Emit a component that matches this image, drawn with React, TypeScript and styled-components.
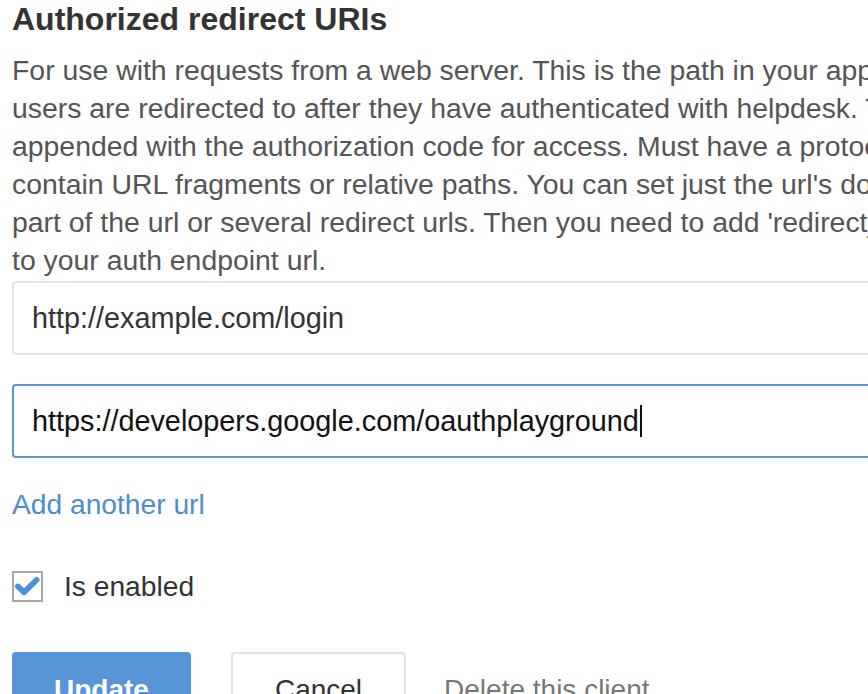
import React from 'react';
import styled, { createGlobalStyle } from 'styled-components';

const GlobalStyle = createGlobalStyle`
  html, body {
    margin: 0;
    padding: 0;
    background: #ffffff;
    overflow: hidden;
  }
  body {
    font-family: "Liberation Sans", Arial, Helvetica, sans-serif;
  }
`;

const Page = styled.div`
  width: 1200px;
  padding: 0 0 0 12px;
  display: flex;
  flex-direction: column;
`;

const Title = styled.h3`
  margin: 0;
  font-size: 32px;
  line-height: 38px;
  font-weight: 700;
  color: #333333;
`;

const HelpText = styled.p`
  margin: 13px 0 2px;
  font-size: 28.4px;
  line-height: 38px;
  color: #555555;
  white-space: nowrap;
`;

const UrlList = styled.div`
  display: flex;
  flex-direction: column;
  gap: 29px;
`;

const UrlField = styled.div<{ focused?: boolean }>`
  height: 74px;
  box-sizing: border-box;
  display: flex;
  align-items: center;
  padding: 0 18px;
  border: 2px solid ${p => (p.focused ? '#5b95d6' : '#e4e4e4')};
  border-radius: 4px;
  font-size: 28.8px;
  color: ${p => (p.focused ? '#111111' : '#333333')};
  background: #ffffff;
`;

const Caret = styled.span`
  display: inline-block;
  width: 2px;
  height: 32px;
  margin-left: 1px;
  background: #111111;
`;

const AddLink = styled.a`
  margin-top: 27px;
  align-self: flex-start;
  font-size: 28.2px;
  line-height: 38px;
  color: #4f8cce;
  text-decoration: none;
  cursor: pointer;
`;

const CheckRow = styled.label`
  margin-top: 44px;
  display: flex;
  align-items: center;
  gap: 21px;
  font-size: 28.2px;
  line-height: 38px;
  color: #333333;
`;

const CheckBox = styled.span`
  width: 31px;
  height: 31px;
  box-sizing: border-box;
  border: 2px solid #a8a8a8;
  background: #ffffff;
  display: flex;
  align-items: center;
  justify-content: center;
`;

const Actions = styled.div`
  margin-top: 47px;
  display: flex;
  align-items: flex-start;
  gap: 40px;
`;

const Button = styled.button<{ primary?: boolean }>`
  font-family: inherit;
  font-size: 28px;
  line-height: 38px;
  padding: 17px ${p => (p.primary ? 40 : 42)}px 14px;
  border-radius: 4px;
  border: 2px solid ${p => (p.primary ? '#5895d6' : '#e2e2e2')};
  background: ${p => (p.primary ? '#5895d6' : '#ffffff')};
  color: ${p => (p.primary ? '#ffffff' : '#333333')};
  font-weight: ${p => (p.primary ? 700 : 400)};
  cursor: pointer;
`;

const DeleteLink = styled.button`
  font-family: inherit;
  font-size: 28px;
  line-height: 38px;
  padding: 19px 0 16px;
  margin-left: -2px;
  border: none;
  background: transparent;
  color: #777777;
  cursor: pointer;
`;

const helpLines = [
  'For use with requests from a web server. This is the path in your application that',
  'users are redirected to after they have authenticated with helpdesk. The path will be',
  'appended with the authorization code for access. Must have a protocol. Cannot',
  "contain URL fragments or relative paths. You can set just the url's domain",
  "part of the url or several redirect urls. Then you need to add 'redirect_uri' param",
  'to your auth endpoint url.',
];

const App: React.FC = () => {
  return (
    <>
      <GlobalStyle />
      <Page>
        <Title>Authorized redirect URIs</Title>
        <HelpText>
          {helpLines.map((line, i) => (
            <React.Fragment key={i}>
              {line}
              {i < helpLines.length - 1 && <br />}
            </React.Fragment>
          ))}
        </HelpText>

        <UrlList>
          <UrlField>http://example.com/login</UrlField>
          <UrlField focused>
            https://developers.google.com/oauthplayground
            <Caret />
          </UrlField>
        </UrlList>

        <AddLink>Add another url</AddLink>

        <CheckRow>
          <CheckBox>
            <svg width="28" height="24" viewBox="0 0 28 24">
              <path
                d="M4 12.5 L10.5 18.5 L23.5 5.5"
                fill="none"
                stroke="#4f8fd8"
                strokeWidth="6"
                strokeLinecap="round"
                strokeLinejoin="round"
              />
            </svg>
          </CheckBox>
          Is enabled
        </CheckRow>

        <Actions>
          <Button primary>Update</Button>
          <Button>Cancel</Button>
          <DeleteLink>Delete this client</DeleteLink>
        </Actions>
      </Page>
    </>
  );
};

export default App;
